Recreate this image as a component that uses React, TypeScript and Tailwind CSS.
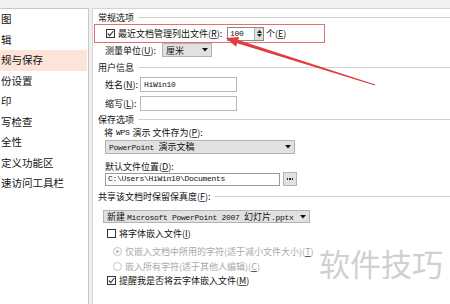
import React from "react";

const Mono = ({ children }: { children: React.ReactNode }) => (
  <span className="font-['Liberation_Mono',monospace] text-[8px] tracking-[-0.3px]">{children}</span>
);

const U = ({ c }: { c: string }) => <span className="underline underline-offset-1 decoration-[#555]">{c}</span>;

const Check = ({ checked }: { checked: boolean }) => (
  <span className="w-[9px] h-[9px] border border-[#333] bg-white flex items-center justify-center shrink-0">
    {checked && (
      <svg width="7" height="7" viewBox="0 0 7 7">
        <polyline points="0.8,3.5 2.8,5.6 6.3,1" fill="none" stroke="#333" strokeWidth="1.1" />
      </svg>
    )}
  </span>
);

const Radio = ({ checked }: { checked: boolean }) => (
  <span className="w-[9px] h-[9px] rounded-full border border-[#c4c4c4] bg-white flex items-center justify-center shrink-0">
    {checked && <span className="w-[3px] h-[3px] rounded-full bg-[#b8b8b8]" />}
  </span>
);

const Arrow = () => (
  <svg width="6" height="4" viewBox="0 0 6 4" className="shrink-0">
    <polygon points="0,0 6,0 3,3.5" fill="#111" />
  </svg>
);

const Header = ({ text, mt }: { text: React.ReactNode; mt: string }) => (
  <div className={`flex items-center h-[12px] ${mt}`}>
    <span className="whitespace-nowrap">{text}</span>
    <div className="flex-1 h-px bg-[#d2d2d2] ml-[4px]" />
  </div>
);

export default function App() {
  const left = ["图", "辑", "规与保存", "份设置", "印", "写检查", "全性", "定义功能区", "速访问工具栏"];
  return (
    <div className="relative w-[450px] h-[304px] overflow-hidden bg-[#f0f0f0] flex flex-col font-['Noto_Sans_CJK_SC',sans-serif] text-[9px] text-[#111] leading-none">
      <div className="h-[8px] shrink-0" />
      <div className="flex flex-1">
        {/* left nav */}
        <div className="w-[89px] bg-white border-t border-r border-[#c8c8c8] flex flex-col">
          {left.map((t, i) => (
            <div
              key={t}
              className={`h-[20.5px] flex items-center text-[10.5px] pl-[1px] mr-[1px] ${i === 2 ? "bg-[#fde4d8]" : ""}`}
            >
              {t}
            </div>
          ))}
        </div>
        <div className="w-[3px]" />
        {/* right panel */}
        <div className="flex-1 bg-white border-t border-l border-[#d4d4d4] flex flex-col pl-[5px]">
          <Header text="常规选项" mt="mt-[2px]" />
          <div className="-ml-[4px] w-[231px] h-[19px] mt-[1px] border border-[#e27272] flex items-center">
            <span className="ml-[11px]"><Check checked /></span>
            <span className="ml-[3px] w-[109px] whitespace-nowrap">
              最近文档管理列出文件(<U c="R" />):
            </span>
            <div className="w-[37px] h-[14px] border border-[#8a8a8a] flex items-stretch bg-white">
              <div className="flex-1 flex items-center pl-[2px]"><Mono>100</Mono></div>
              <div className="w-[9px] bg-[#dedede] border-l border-[#b5b5b5] flex flex-col items-center justify-center gap-[1px]">
                <svg width="5" height="3" viewBox="0 0 5 3"><polygon points="2.5,0 5,3 0,3" fill="#222" /></svg>
                <svg width="5" height="3" viewBox="0 0 5 3"><polygon points="0,0 5,0 2.5,3" fill="#222" /></svg>
              </div>
            </div>
            <span className="ml-[2px] whitespace-nowrap">个(<U c="E" />)</span>
          </div>
          <div className="h-[14px] flex items-center pl-[7px]">
            <span className="w-[57px] whitespace-nowrap">测量单位(<U c="U" />):</span>
            <div className="w-[50px] h-[14px] bg-[#e1e1e1] border border-[#b3b3b3] flex items-center justify-between px-[3px]">
              <span>厘米</span>
              <Arrow />
            </div>
          </div>
          <Header text="用户信息" mt="mt-[4px]" />
          <div className="h-[15px] mt-[4px] flex items-center pl-[7px]">
            <span className="w-[35px] whitespace-nowrap">姓名(<U c="N" />):</span>
            <div className="w-[97px] h-[15px] border border-[#b8b8b8] bg-white flex items-center pl-[3px]">
              <Mono>HiWin10</Mono>
            </div>
          </div>
          <div className="h-[15px] mt-[4px] flex items-center pl-[7px]">
            <span className="w-[35px] whitespace-nowrap">缩写(<U c="L" />):</span>
            <div className="w-[97px] h-[15px] border border-[#b8b8b8] bg-white" />
          </div>
          <Header text="保存选项" mt="mt-[2px]" />
          <div className="h-[12px] mt-[1px] flex items-center pl-[6px] whitespace-nowrap">
            将 <span className="mx-[3px]"><Mono>WPS</Mono></span>演示 文件存为(<U c="P" />):
          </div>
          <div className="ml-[7px] mt-[2px] w-[190px] h-[14px] bg-[#e1e1e1] border border-[#b3b3b3] flex items-center justify-between px-[3px]">
            <span className="whitespace-nowrap"><Mono>PowerPoint </Mono>演示文稿</span>
            <Arrow />
          </div>
          <div className="h-[12px] mt-[6px] flex items-center pl-[7px] whitespace-nowrap">
            默认文件位置(<U c="D" />):
          </div>
          <div className="h-[14px] flex items-center pl-[7px]">
            <div className="w-[175px] h-[13px] border border-[#9a9a9a] bg-white flex items-center pl-[2px]">
              <Mono>C:\Users\HiWin10\Documents</Mono>
            </div>
            <div className="ml-[3px] w-[14px] h-[14px] bg-[#e1e1e1] border border-[#b3b3b3] flex items-center justify-center gap-[1px]">
              <span className="w-[1.5px] h-[1.5px] bg-[#222]" />
              <span className="w-[1.5px] h-[1.5px] bg-[#222]" />
              <span className="w-[1.5px] h-[1.5px] bg-[#222]" />
            </div>
          </div>
          <Header text={<>共享该文档时保留保真度(<U c="F" />):</>} mt="mt-[4px]" />
          <div className="ml-[5px] mt-[8px] w-[207px] h-[13px] bg-[#e1e1e1] border border-[#b3b3b3] flex items-center justify-between px-[3px]">
            <span className="whitespace-nowrap">
              新建 <Mono>Microsoft PowerPoint 2007 </Mono>幻灯片<Mono>.pptx</Mono>
            </span>
            <Arrow />
          </div>
          <div className="h-[12px] mt-[4px] flex items-center pl-[9px]">
            <Check checked={false} />
            <span className="ml-[3px] whitespace-nowrap">将字体嵌入文件(<U c="I" />)</span>
          </div>
          <div className="h-[12px] mt-[6px] flex items-center pl-[15px] text-[#a8a8a8]">
            <Radio checked />
            <span className="ml-[3px] whitespace-nowrap">仅嵌入文档中所用的字符(适于减小文件大小)(<U c="T" />)</span>
          </div>
          <div className="h-[12px] mt-[3px] flex items-center pl-[15px] text-[#a8a8a8]">
            <Radio checked={false} />
            <span className="ml-[3px] whitespace-nowrap">嵌入所有字符(适于其他人编辑)(<U c="C" />)</span>
          </div>
          <div className="h-[12px] mt-[2px] flex items-center pl-[9px]">
            <Check checked />
            <span className="ml-[3px] whitespace-nowrap">提醒我是否将云字体嵌入文件(<U c="M" />)</span>
          </div>
        </div>
      </div>
      {/* watermark */}
      <div className="absolute left-[319px] top-[247px] text-[31px] text-[#d0d0d0] leading-none whitespace-nowrap">
        软件技巧
      </div>
      {/* red arrow */}
      <svg className="absolute left-0 top-0 pointer-events-none" width="450" height="304" viewBox="0 0 450 304">
        <polygon
          points="226,38 239.2,36.9 238.2,40.1 375.2,84.6 374.9,85.4 237.1,43.2 236.0,46.8"
          fill="#e23c3c"
        />
      </svg>
    </div>
  );
}
